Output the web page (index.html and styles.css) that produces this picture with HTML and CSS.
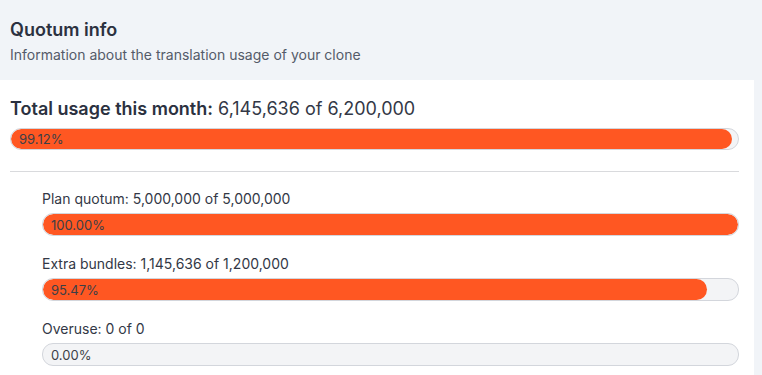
FILE: index.html
```
<!doctype html>
<html lang="en">
<head>
	<meta charset="UTF-8">
	<title>Quotum info</title>
	<link rel="stylesheet" href="styles.css">
</head>
<body>
	<div class="card">
		<header class="head">
			<h1>Quotum info</h1>
			<p>Information about the translation usage of your clone</p>
		</header>

		<section class="body">
			<h2><b>Total usage this month:</b> 6,145,636 of 6,200,000</h2>
			<div class="bar">
				<span class="fill" style="width: 99.12%"></span>
				<span class="pct">99.12%</span>
			</div>

			<hr>

			<div class="parts">
				<div class="row">
					<div class="label">Plan quotum: 5,000,000 of 5,000,000</div>
					<div class="bar">
						<span class="fill" style="width: 100%"></span>
						<span class="pct">100.00%</span>
					</div>
				</div>
				<div class="row">
					<div class="label">Extra bundles: 1,145,636 of 1,200,000</div>
					<div class="bar">
						<span class="fill" style="width: 95.47%"></span>
						<span class="pct">95.47%</span>
					</div>
				</div>
				<div class="row">
					<div class="label">Overuse: 0 of 0</div>
					<div class="bar">
						<span class="fill" style="width: 0%"></span>
						<span class="pct">0.00%</span>
					</div>
				</div>
			</div>
		</section>
	</div>
</body>
</html>
```

FILE: styles.css
```
html, body {margin: 0; height: 100%;}
body {
	background: #f1f4f8;
	font-family: Inter, "Noto Sans", sans-serif;
	color: #2d3342;
}

.card {width: 754px;}

.head {
	padding: 18px 10px 15px;
}
.head h1 {
	margin: 0;
	font-size: 18px; line-height: 24px; font-weight: 600;
	color: #2b3140;
}
.head p {
	margin: 3px 0 0;
	font-size: 14px; line-height: 20px;
	color: #545b69;
}

.body {
	background: #fff;
	padding: 17px 15px 12px 10px;
}
.body h2 {
	margin: 0 0 7px;
	font-size: 18px; line-height: 24px; font-weight: 400;
	color: #333846;
}
.body h2 b {font-weight: 600; color: #2b3140;}

.bar {
	position: relative;
	height: 22px;
	box-sizing: border-box;
	border: 1px solid #d3d6dc;
	border-radius: 11px;
	background: #f3f4f6;
	overflow: hidden;
	display: flex; align-items: center;
}
.bar .fill {
	position: absolute;
	left: 0; top: 0; bottom: 0;
	background: #ff5722;
	border-radius: 11px;
}
.bar .pct {
	position: relative;
	padding-left: 8px;
	font-size: 13px;
	color: #3c3f47;
}

hr {
	margin: 21px 0 17px;
	border: 0; border-top: 1px solid #d9dadd;
}

.parts {
	padding-left: 32px;
	display: flex; flex-direction: column; gap: 18px;
}
.label {
	font-size: 14px; line-height: 20px;
	color: #333846;
	margin-bottom: 4px;
}
.row .bar {height: 23px;}
```
